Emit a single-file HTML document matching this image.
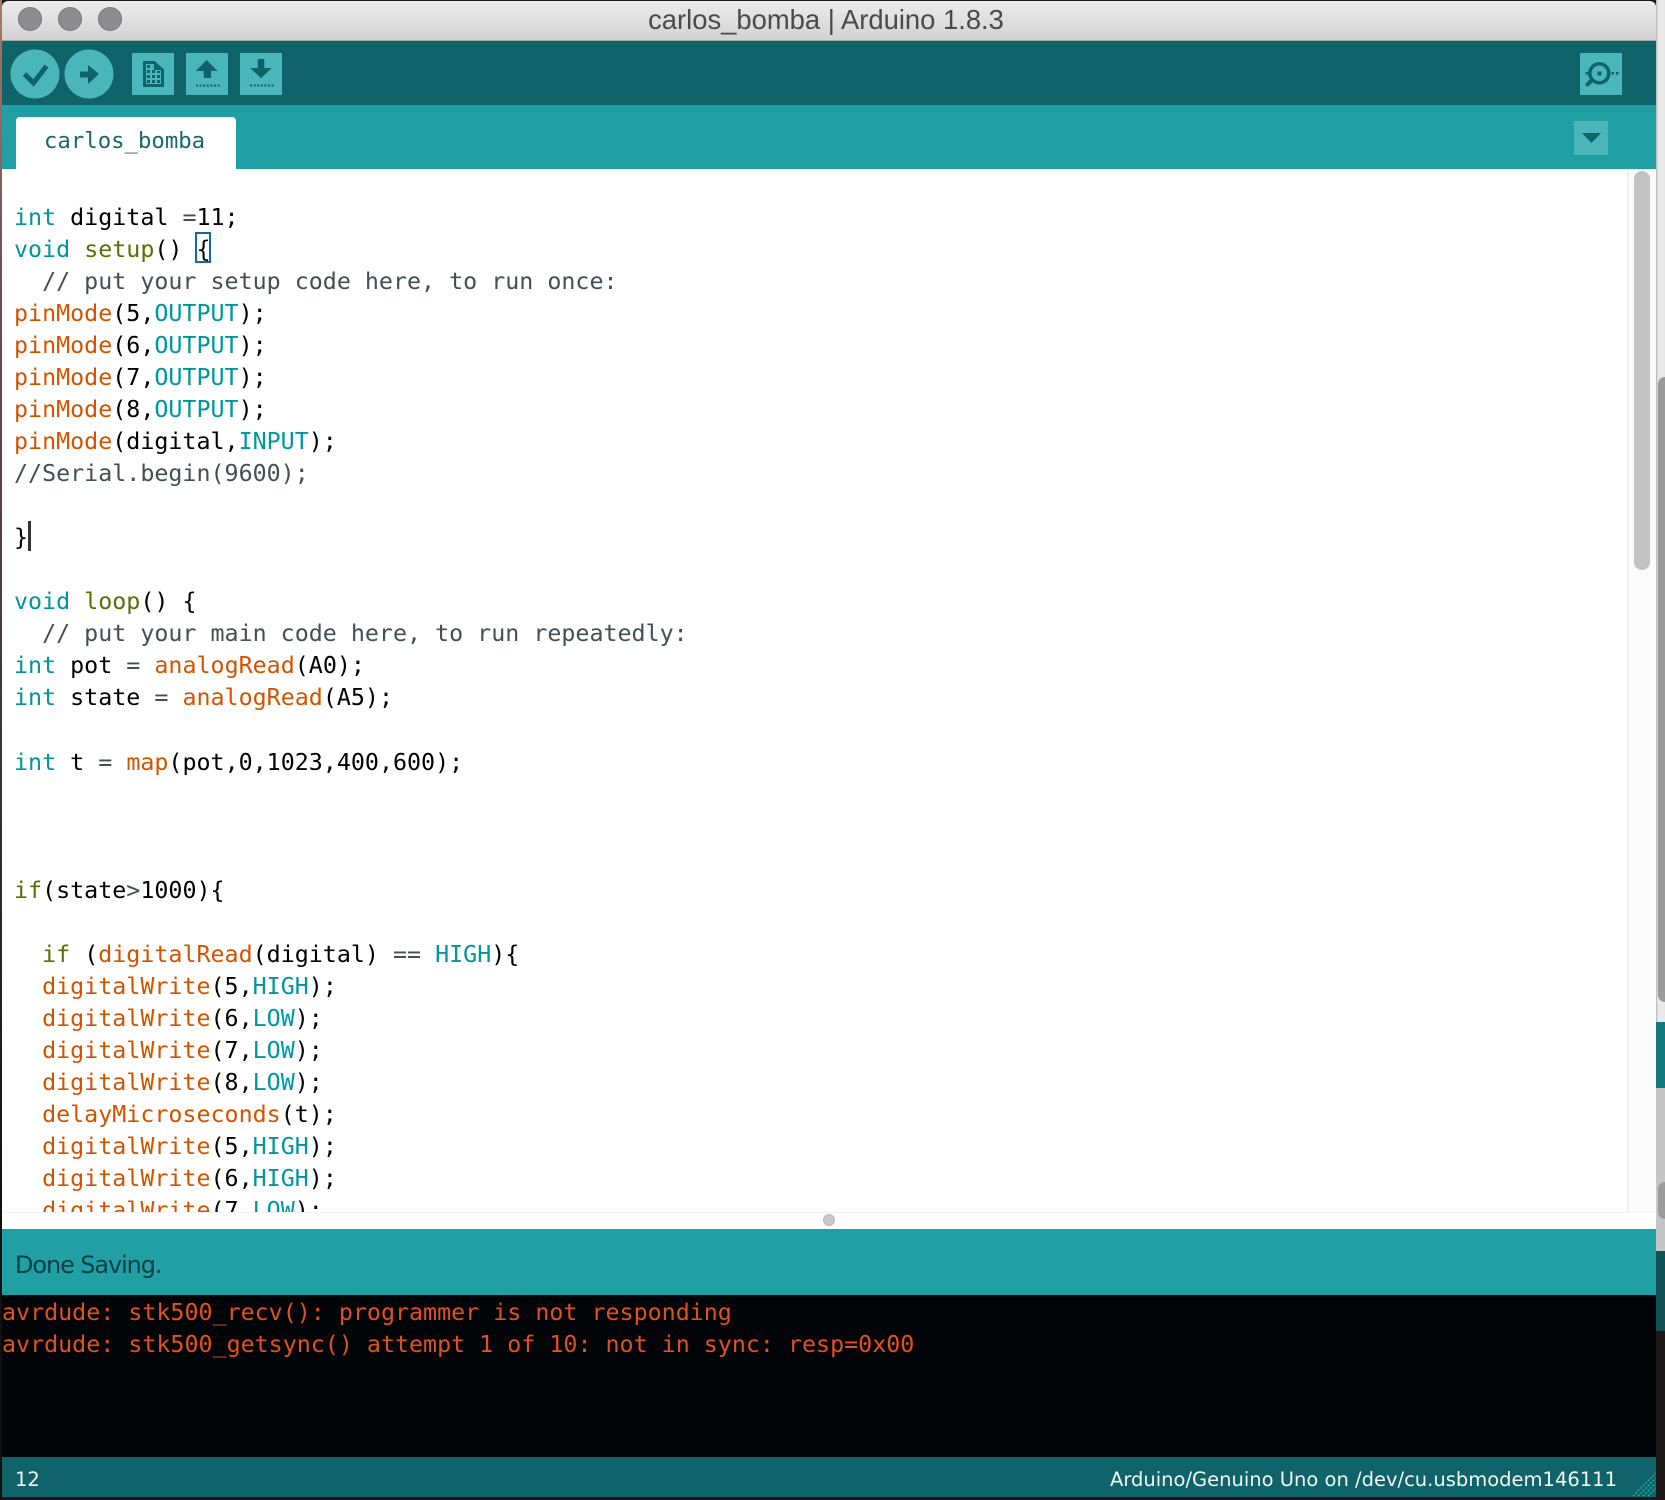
<!DOCTYPE html>
<html><head><meta charset="utf-8"><style>
html,body{margin:0;padding:0;width:1665px;height:1500px;overflow:hidden;background:#1a1716}
div,pre,svg{position:absolute;margin:0}
#code,#con{font-family:"DejaVu Sans Mono","Liberation Mono",monospace;font-size:23.32px;line-height:32.03px;white-space:pre;color:#000}
#con{line-height:32.4px}
.k{color:#00979c}.f{color:#d35400}.o{color:#5e6d03}.c{color:#434f54}.g{color:#434f54}
</style></head><body>
<div style="left:0;top:0;width:2px;height:1500px;background:linear-gradient(#a8796a,#6a5050 300px,#3a3030 800px,#111 1200px)"></div>
<div style="left:1656px;top:0;width:9px;height:1022px;background:linear-gradient(90deg,#b0b0b0,#e8e8e8 2px)"></div>
<div style="left:1658px;top:377px;width:7px;height:625px;background:#9a9a9a;border-radius:7px 0 0 7px"></div>
<div style="left:1656px;top:1022px;width:9px;height:66px;background:#12797d"></div>
<div style="left:1656px;top:1088px;width:9px;height:163px;background:#c6c6c6"></div>
<div style="left:1658px;top:1182px;width:7px;height:37px;background:#9a9a9a;border-radius:7px 0 0 7px"></div>
<div style="left:1656px;top:1251px;width:9px;height:80px;background:#125055"></div>

<div style="left:2px;top:1px;width:1654px;height:39px;background:linear-gradient(#ececec,#d2d2d2);border-radius:6px 6px 0 0;border-bottom:1px solid #a9a9a9"></div>
<div style="left:18px;top:7px;width:22px;height:22px;border-radius:50%;background:#8d8d8f;border:1px solid #79797b"></div>
<div style="left:58px;top:7px;width:22px;height:22px;border-radius:50%;background:#8d8d8f;border:1px solid #79797b"></div>
<div style="left:98px;top:7px;width:22px;height:22px;border-radius:50%;background:#8d8d8f;border:1px solid #79797b"></div>
<div style="left:-1px;top:4px;width:1654px;text-align:center;font:27.4px/32px 'Liberation Sans',sans-serif;color:#4a4a4a">carlos_bomba | Arduino 1.8.3</div>

<div style="left:2px;top:41px;width:1654px;height:64px;background:#0e6469"></div>
<div style="left:2px;top:105px;width:1654px;height:64px;background:#20a0a5"></div>
<div style="left:16px;top:117px;width:220px;height:52px;background:#fff;border-radius:4px 4px 0 0"></div>
<div style="left:44px;top:125px;font:22.3px/32px 'DejaVu Sans Mono',monospace;color:#17696e;white-space:pre">carlos_bomba</div>
<div style="left:1574px;top:121px;width:34px;height:34px;background:#4ab6ba"></div>

<svg style="left:0;top:0" width="1665" height="170" viewBox="0 0 1665 170">
<g fill="#4ab6ba">
<circle cx="35" cy="74" r="24.5"/><circle cx="89" cy="74" r="24.5"/>
<rect x="132" y="53" width="42" height="42"/><rect x="186" y="53" width="42" height="42"/><rect x="240" y="53" width="42" height="42"/><rect x="1580" y="53" width="42" height="42"/>
</g>
<g fill="#0e6469" stroke="none">
<polyline points="24.500,74 33.500,83 46.500,66" fill="none" stroke="#0e6469" stroke-width="5"/>
<path d="M80 71.500H88V65L99 74 88 84V77.500H80Z"/>
<path d="M144.500 62.500H154L162.500 70V85.500H144.500Z" fill="none" stroke="#0e6469" stroke-width="3"/>
<path d="M154 62V70H163Z"/>
<path d="M147 65h3v3h-3zM147 70h3v3h-3zM152 70h3v3h-3zM157 71h3v2h-3zM147 75h3v3h-3zM152 75h3v3h-3zM157 75h3v3h-3zM147 80h3v3h-3zM152 80h3v3h-3zM157 80h3v3h-3z"/>
<path d="M206.700 60L217.700 71H211V78H203.700V71H195.700Z"/>
<path d="M196 84.500h2v2h-2zM199.600 84.500h2v2h-2zM203.200 84.500h2v2h-2zM206.800 84.500h2v2h-2zM210.400 84.500h2v2h-2zM214 84.500h2v2h-2zM217.600 84.500h2v2h-2z"/>
<path d="M257.700 59H264.300V68H271.700L261 78.300 250.300 68H257.700Z"/>
<path d="M250 84.500h2v2h-2zM253.600 84.500h2v2h-2zM257.200 84.500h2v2h-2zM260.800 84.500h2v2h-2zM264.400 84.500h2v2h-2zM268 84.500h2v2h-2zM271.600 84.500h2v2h-2z"/>
<circle cx="1599.300" cy="73.300" r="9.500" fill="none" stroke="#0e6469" stroke-width="3.500"/>
<path d="M1592 80L1587.500 84.500" stroke="#0e6469" stroke-width="4" stroke-linecap="round"/>
<rect x="1597.500" y="71.500" width="4" height="4"/><rect x="1585.500" y="72" width="2.500" height="2.500"/><rect x="1611.500" y="72" width="2.500" height="2.500"/><rect x="1616" y="72" width="2.500" height="2.500"/>
<path d="M1582 133H1601L1591.500 143Z"/>
</g>
</svg>

<div style="left:2px;top:169px;width:1654px;height:1043px;background:#fff;overflow:hidden;border-bottom:1px solid #f2f2f2">
<div style="left:1625px;top:0;width:29px;height:1043px;background:#fbfbfb;border-left:2px solid #eef0f0;box-sizing:border-box"></div>
<div style="left:1632px;top:2px;width:16px;height:399px;background:#c2c2c2;border-radius:8px"></div>
<div style="left:193px;top:63px;width:16px;height:31px;border:2px solid #14699a;box-sizing:border-box"></div>
<div style="left:26px;top:352px;width:3px;height:30px;background:#333"></div>
<pre id="code" style="left:12px;top:33px"><span class="k">int</span> digital <span class="g">=</span>11;
<span class="k">void</span> <span class="o">setup</span>() {
  <span class="c">// put your setup code here, to run once:</span>
<span class="f">pinMode</span>(5,<span class="k">OUTPUT</span>);
<span class="f">pinMode</span>(6,<span class="k">OUTPUT</span>);
<span class="f">pinMode</span>(7,<span class="k">OUTPUT</span>);
<span class="f">pinMode</span>(8,<span class="k">OUTPUT</span>);
<span class="f">pinMode</span>(digital,<span class="k">INPUT</span>);
<span class="c">//Serial.begin(9600);</span>

}

<span class="k">void</span> <span class="o">loop</span>() {
  <span class="c">// put your main code here, to run repeatedly:</span>
<span class="k">int</span> pot <span class="g">=</span> <span class="f">analogRead</span>(A0);
<span class="k">int</span> state <span class="g">=</span> <span class="f">analogRead</span>(A5);

<span class="k">int</span> t <span class="g">=</span> <span class="f">map</span>(pot,0,1023,400,600);



<span class="o">if</span>(state<span class="g">&gt;</span>1000){

  <span class="o">if</span> (<span class="f">digitalRead</span>(digital) <span class="g">==</span> <span class="k">HIGH</span>){
  <span class="f">digitalWrite</span>(5,<span class="k">HIGH</span>);
  <span class="f">digitalWrite</span>(6,<span class="k">LOW</span>);
  <span class="f">digitalWrite</span>(7,<span class="k">LOW</span>);
  <span class="f">digitalWrite</span>(8,<span class="k">LOW</span>);
  <span class="f">delayMicroseconds</span>(t);
  <span class="f">digitalWrite</span>(5,<span class="k">HIGH</span>);
  <span class="f">digitalWrite</span>(6,<span class="k">HIGH</span>);
  <span class="f">digitalWrite</span>(7,<span class="k">LOW</span>);</pre>
</div>
<div style="left:2px;top:1213px;width:1654px;height:16px;background:#fff"></div>
<div style="left:823px;top:1214px;width:12px;height:12px;border-radius:50%;background:#c8c8c8;border:1px solid #bbb;box-sizing:border-box"></div>
<div style="left:2px;top:1229px;width:1654px;height:66px;background:#20a0a5"></div>
<div style="left:15px;top:1247px;font:24px/36px 'DejaVu Sans',sans-serif;letter-spacing:-1.1px;color:#0d4045;white-space:pre">Done Saving.</div>
<div style="left:2px;top:1295px;width:1654px;height:162px;background:#020507"></div>
<pre id="con" style="left:2px;top:1297px;color:#e2501f">avrdude: stk500_recv(): programmer is not responding
avrdude: stk500_getsync() attempt 1 of 10: not in sync: resp=0x00</pre>
<div style="left:2px;top:1457px;width:1654px;height:40px;background:#0e6469"></div>
<div style="left:15px;top:1464px;font:19.5px/32px 'DejaVu Sans',sans-serif;color:#f2f6f6">12</div>
<div style="right:48px;top:1464px;font:19.5px/32px 'DejaVu Sans',sans-serif;color:#f2f6f6;white-space:pre">Arduino/Genuino Uno on /dev/cu.usbmodem146111</div>
<svg style="left:1630px;top:1470px" width="26" height="27" viewBox="0 0 26 27"><path d="M3 26L26 3M8 26L26 8M13 26L26 13M18 26L26 18" stroke="#2aa5a9" stroke-width="1.500" stroke-dasharray="2 1.500" fill="none"/></svg>
</body></html>
